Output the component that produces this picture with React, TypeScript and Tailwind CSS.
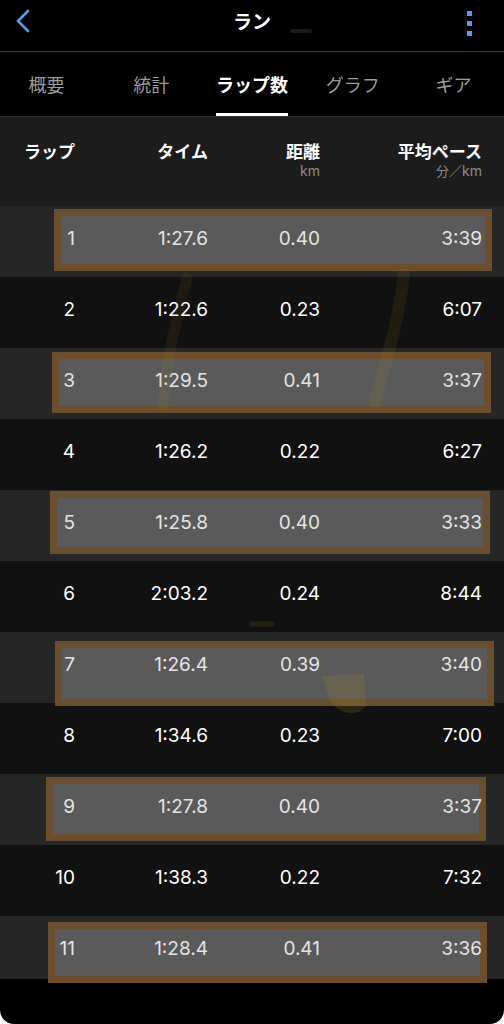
import React from "react";

const laps = [
  { no: 1, time: "1:27.6", dist: "0.40", pace: "3:39" },
  { no: 2, time: "1:22.6", dist: "0.23", pace: "6:07" },
  { no: 3, time: "1:29.5", dist: "0.41", pace: "3:37" },
  { no: 4, time: "1:26.2", dist: "0.22", pace: "6:27" },
  { no: 5, time: "1:25.8", dist: "0.40", pace: "3:33" },
  { no: 6, time: "2:03.2", dist: "0.24", pace: "8:44" },
  { no: 7, time: "1:26.4", dist: "0.39", pace: "3:40" },
  { no: 8, time: "1:34.6", dist: "0.23", pace: "7:00" },
  { no: 9, time: "1:27.8", dist: "0.40", pace: "3:37" },
  { no: 10, time: "1:38.3", dist: "0.22", pace: "7:32" },
  { no: 11, time: "1:28.4", dist: "0.41", pace: "3:36" },
];

// hand-drawn marker boxes over the odd laps (offsets relative to the row)
const marks: Record<number, { top: number; left: number; width: number; height: number }> = {
  1: { top: 3, left: 54, width: 438, height: 62 },
  3: { top: 4, left: 52, width: 439, height: 61 },
  5: { top: 1, left: 50, width: 440, height: 63 },
  7: { top: 9, left: 55, width: 439, height: 65 },
  9: { top: 3, left: 46, width: 440, height: 64 },
  11: { top: 6, left: 48, width: 439, height: 61 },
};

const tabs = ["概要", "統計", "ラップ数", "グラフ", "ギア"];

const jp = "font-['Noto_Sans_CJK_JP','Noto_Sans',sans-serif]";
const num = "font-['Inter','Liberation_Sans',sans-serif]";
const cols = "grid grid-cols-[75px_133px_112px_162px]";

export default function App() {
  return (
    <div className="min-h-screen bg-white">
      <div className={`relative h-[1024px] overflow-hidden rounded-b-[14px] bg-black ${jp}`}>
        {/* Top bar */}
        <div className="relative flex h-[52px] items-center justify-center border-b border-[#3a3a3a]">
          <svg className="absolute left-[14px] top-[9px]" width="20" height="24" viewBox="0 0 20 24">
            <path d="M14 2 L4 12 L14 22" fill="none" stroke="#5b9be6" strokeWidth="2.6" strokeLinecap="round" strokeLinejoin="round" />
          </svg>
          <span className="-mt-[8px] text-[19px] font-bold text-white">ラン</span>
          <span className="absolute left-[290px] top-[29px] h-[4px] w-[22px] rounded-full bg-[#1a1a1a]" />
          <div className="absolute right-[32px] top-[11px] flex flex-col gap-[5px]">
            <span className="h-[5px] w-[5px] bg-[#5b9be6]" />
            <span className="h-[5px] w-[5px] bg-[#5b9be6]" />
            <span className="h-[5px] w-[5px] bg-[#5b9be6]" />
          </div>
        </div>

        {/* Tabs */}
        <div className="grid h-[65px] grid-cols-5 border-b border-[#333]">
          {tabs.map((t, i) => (
            <div key={t} className="flex flex-col items-center">
              <div className="flex flex-col items-stretch">
                <span
                  className={`pt-[19px] text-[18px] leading-[26px] ${
                    i === 2 ? "font-bold text-white" : "text-[#9c9c9c]"
                  } ${i === 0 ? "-ml-[8px]" : ""}`}
                >
                  {t}
                </span>
                {i === 2 && <span className="mt-[16px] h-[3px] bg-white" />}
              </div>
            </div>
          ))}
        </div>

        {/* Column header */}
        <div className={`${cols} h-[89px] bg-[#1c1c1c] pt-[22px] text-right text-white`}>
          <span className="text-[17px] font-bold leading-[24px]">ラップ</span>
          <span className="text-[17px] font-bold leading-[24px]">タイム</span>
          <div className="flex flex-col items-end">
            <span className="text-[17px] font-bold leading-[24px]">距離</span>
            <span className={`${num} text-[14px] leading-[16px] text-[#8c8c8c]`}>km</span>
          </div>
          <div className="flex flex-col items-end">
            <span className="text-[17px] font-bold leading-[24px]">平均ペース</span>
            <span className="text-[13px] leading-[16px] text-[#8c8c8c]">
              分／<span className={`${num} text-[14px]`}>km</span>
            </span>
          </div>
        </div>

        {/* Laps */}
        <div className="relative">
          {laps.map((l) => {
            const m = marks[l.no];
            const odd = l.no % 2 === 1;
            return (
              <div
                key={l.no}
                className={`relative ${l.no === 11 ? "h-[63px]" : "h-[71px]"} ${
                  odd ? "bg-[#262626]" : "bg-[#111111]"
                }`}
              >
                {m && (
                  <div
                    className="absolute z-10 border-[7px] border-[#6b4e2d] bg-[#5a5a5a]"
                    style={{ top: m.top, left: m.left, width: m.width, height: m.height }}
                  />
                )}
                <div
                  className={`${cols} relative z-20 pt-[21px] text-right text-[19px] leading-[24px] ${num} ${
                    m ? "text-[#e4e4e4]" : "text-white"
                  }`}
                >
                  <span>{l.no}</span>
                  <span>{l.time}</span>
                  <span>{l.dist}</span>
                  <span>{l.pace}</span>
                </div>
              </div>
            );
          })}

          {/* faint leftover marker strokes */}
          <svg className="pointer-events-none absolute left-0 top-0 z-30" width="504" height="800">
            <path d="M187 72 C178 110 166 150 163 200" fill="none" stroke="rgba(210,150,20,0.08)" strokeWidth="11" strokeLinecap="round" />
            <path d="M404 68 C398 120 384 160 375 196" fill="none" stroke="rgba(210,150,20,0.09)" strokeWidth="12" strokeLinecap="round" />
            <path d="M252 418 L272 418" fill="none" stroke="rgba(190,140,30,0.14)" strokeWidth="5" strokeLinecap="round" />
            <path d="M322 470 L364 468 L366 500 C356 512 338 508 330 494 Z" fill="rgba(190,140,30,0.16)" />
          </svg>
        </div>
      </div>
    </div>
  );
}
